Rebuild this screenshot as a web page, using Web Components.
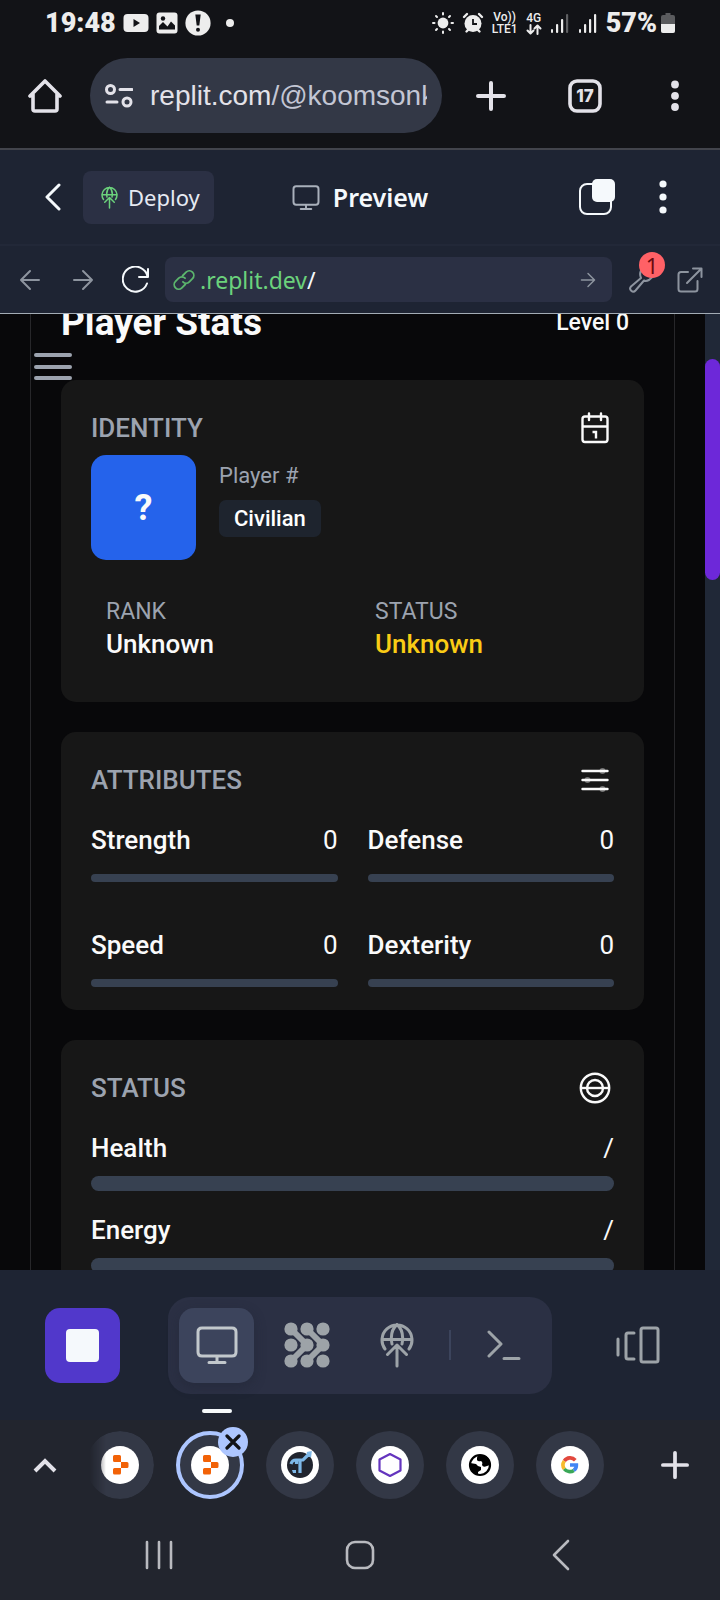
<!DOCTYPE html>
<html lang="en">
<head>
<meta charset="utf-8">
<meta name="viewport" content="width=device-width, initial-scale=1">
<title>Preview - Replit</title>
<style>
  html, body { margin: 0; height: 100%; background: #22252e; }
  body { font-family: Roboto, sans-serif; color: #fafafa; }
</style>
</head>
<body>
<phone-screen>
  <status-bar></status-bar>
  <browser-toolbar></browser-toolbar>
  <workspace-header></workspace-header>
  <preview-bar></preview-bar>
  <preview-pane>
    <player-stats>
      <stat-card heading="IDENTITY" icon="calendar">
        <identity-panel rank="Unknown" status="Unknown">Civilian</identity-panel>
      </stat-card>
      <stat-card heading="ATTRIBUTES" icon="sliders">
        <meter-grid>
          <stat-meter label="Strength">0</stat-meter>
          <stat-meter label="Defense">0</stat-meter>
          <stat-meter label="Speed">0</stat-meter>
          <stat-meter label="Dexterity">0</stat-meter>
        </meter-grid>
      </stat-card>
      <stat-card heading="STATUS" icon="target">
        <stat-meter label="Health" thick>/</stat-meter>
        <stat-meter label="Energy" thick>/</stat-meter>
      </stat-card>
    </player-stats>
  </preview-pane>
  <workspace-dock></workspace-dock>
  <tab-strip></tab-strip>
  <system-nav></system-nav>
</phone-screen>

<script>
const RESET = `
  *, *::before, *::after { box-sizing: border-box; }
  button, a, input { font: inherit; color: inherit; text-decoration: none; }
  button { background: none; border: 0; padding: 0; margin: 0; }
  button, a { display: flex; align-items: center; justify-content: center; }
  input { background: none; border: 0; padding: 0; margin: 0; outline: 0; min-width: 0; }
`;
const define = (name, render) => customElements.define(name, class extends HTMLElement {
  connectedCallback() {
    if (this.shadowRoot) return;
    this.attachShadow({ mode: 'open' }).innerHTML = `<style>${RESET}</style>` + render(this);
  }
});

/* name: [width, height, markup]; strokes use currentColor */
const line = (w, d, extra = '') => `<path d="${d}" fill="none" stroke="currentColor" stroke-width="${w}" stroke-linecap="round" stroke-linejoin="round" ${extra}/>`;
const ICONS = {
  youtube: [26, 20, `<rect x="0.500" y="1" width="25" height="18" rx="4" fill="currentColor"/><path d="M10.500 6v8l6.500-4z" fill="#121317"/>`],
  image: [22, 22, `<rect x=".5" y=".5" width="21" height="21" rx="3" fill="currentColor"/><circle cx="7" cy="6.500" r="2.200" fill="#121317"/><path d="M3 17.500v-3.500l4-4 4.500 4.500 3.500-5 4 4v4z" fill="#121317"/>`],
  alert: [26, 26, `<circle cx="13" cy="13" r="12.600" fill="currentColor"/><path d="M10.300 4.500h5.400l-1.400 11h-2.600z" fill="#121317"/><circle cx="13" cy="19.800" r="2" fill="#121317"/>`],
  dot: [8, 8, `<circle cx="4" cy="4" r="4" fill="currentColor"/>`],
  sun: [22, 22, `<circle cx="11" cy="11" r="5.400" fill="currentColor"/>${line(2, 'M11 1v1.500M11 19.500V21M1 11h1.500M19.500 11H21M4 4l1 1M17 17l1 1M18 4l-1 1M5 17l-1 1')}`],
  alarm: [22, 22, `<circle cx="11" cy="11.500" r="8.500" fill="currentColor"/>${line(2.400, 'M2 5l3-3M20 5l-3-3M4.500 19.500l2-2M17.500 19.500l-2-2')}<path d="M11 7v5h4" fill="none" stroke="#121317" stroke-width="1.800"/>`],
  updown: [16, 11, line(2, 'M4.500 1v8M1.500 6.500l3 3 3-3M11.500 10V2M8.500 4.500l3-3 3 3')],
  signal3: [20, 20, `<g fill="currentColor"><rect x="1" y="16" width="2" height="4" rx="1"/><rect x="6" y="11" width="2.200" height="9" rx="1"/><rect x="11" y="6" width="2.200" height="14" rx="1"/><rect x="16" y="1" width="2.200" height="19" rx="1" opacity=".35"/></g>`],
  signal4: [20, 20, `<g fill="currentColor"><rect x="1" y="16" width="2" height="4" rx="1"/><rect x="6" y="11" width="2.200" height="9" rx="1"/><rect x="11" y="6" width="2.200" height="14" rx="1"/><rect x="16" y="1" width="2.200" height="19" rx="1"/></g>`],
  battery: [14, 20, `<path d="M4.500 0h5v2H12q2 0 2 2v14q0 2-2 2H2q-2 0-2-2V4q0-2 2-2h2.500z" fill="#5a5b5e"/><path d="M0 11h14v7q0 2-2 2H2q-2 0-2-2z" fill="currentColor"/>`],
  home: [34, 36, line(3.600, 'M2 18L17 3l15 15M5 16v15q0 2 2 2h20q2 0 2-2V16')],
  tune: [28, 24, `<g fill="none" stroke="currentColor" stroke-width="3" stroke-linecap="round"><circle cx="5.500" cy="5.500" r="4"/><path d="M15 5.500h12M2 18h10"/><circle cx="22" cy="18" r="4"/></g>`],
  plus: [30, 30, line(4, 'M15 2v26M2 15h26')],
  tabs: [34, 34, `<rect x="2" y="2" width="30" height="30" rx="7" fill="none" stroke="currentColor" stroke-width="3.600"/>`],
  more: [8, 32, `<g fill="currentColor"><circle cx="4" cy="4.500" r="3.900"/><circle cx="4" cy="15.800" r="3.900"/><circle cx="4" cy="27" r="3.900"/></g>`],
  more2: [8, 34, `<g fill="currentColor"><circle cx="4" cy="4" r="3.600"/><circle cx="4" cy="17" r="3.600"/><circle cx="4" cy="30" r="3.600"/></g>`],
  back: [16, 28, line(3, 'M14 2L2 14l12 12')],
  globe: [34, 46, `<g fill="none" stroke="currentColor" stroke-width="3" stroke-linecap="round" stroke-linejoin="round"><path d="M5 27A15 15 0 1 1 29 27M2 17.500h30M12 22C10 12 13 6 17 2.500M22 22C24 12 21 6 17 2.500M17 44V23M7.500 32.500L17 23l9.500 9.500"/></g>`],
  monitor: [42, 38, line(3, 'M6 2h30q4 0 4 4v20q0 4-4 4H6q-4 0-4-4V6q0-4 4-4zM21 30v6M13 36.500h16')],
  layers: [38, 38, `<rect x="2" y="6" width="31" height="30" rx="7" fill="none" stroke="currentColor" stroke-width="2"/><rect x="14" y="1" width="23" height="23" rx="5" fill="currentColor"/>`],
  arrowLeft: [22, 22, line(2, 'M20 11H2M11 2L2 11l9 9')],
  arrowRight: [22, 22, line(2, 'M2 11h18M11 2l9 9-9 9')],
  reload: [28, 28, line(2, 'M26 3v8h-9M25.500 10.500A12.500 12.500 0 1 0 25 17.500')],
  link: [22, 22, `<g transform="rotate(-45 11 11)" fill="none" stroke="currentColor" stroke-width="1.800" stroke-linecap="round"><path d="M9 15H4a4.500 4.500 0 0 1 0-9h4.500a4.500 4.500 0 0 1 4.500 4.500"/><path d="M13 7h5a4.500 4.500 0 0 1 0 9h-4.500A4.500 4.500 0 0 1 9 11.500"/></g>`],
  wrench: [28, 28, line(2, 'M25 9.500L20 14q-3 1.500-5 .5L6.500 24.500a3 3 0 0 1-4.500-4L12 12Q9.500 6 14 2.500')],
  external: [26, 26, line(2, 'M11 5H4Q1.500 5 1.500 7.500V22Q1.500 24.500 4 24.500H18Q20.500 24.500 20.500 22v-8M16 1.500h8.500V10M24 2L10 16')],
  menu: [38, 28, `<g fill="currentColor"><rect y="0" width="38" height="4" rx="2"/><rect y="12" width="38" height="4" rx="2"/><rect y="23" width="38" height="4" rx="2"/></g>`],
  calendar: [36, 36, line(2.400, 'M7 6.500h20q2.500 0 2.500 2.500v20.500q0 2.500-2.500 2.500H7q-2.500 0-2.500-2.500V9q0-2.500 2.500-2.500zM4.500 16.500h25M11 3.500v6.500M23 3.500v6.500') + `<path d="M14.500 22h3.500v6.500" fill="none" stroke="currentColor" stroke-width="2.400"/>`],
  sliders: [36, 36, `<g fill="currentColor" opacity=".4"><circle cx="24.500" cy="9" r="3"/><circle cx="9.500" cy="18" r="3"/><circle cx="24.500" cy="27" r="3"/></g>${line(2.400, 'M4.500 9h25M4.500 18h25M4.500 27h25')}`],
  target: [36, 36, `<g fill="none" stroke="currentColor" stroke-width="2.400"><circle cx="17" cy="18" r="14.200"/><circle cx="17" cy="18" r="8"/><path d="M3 18h28"/></g>`],
  cluster: [46, 46, `<g fill="currentColor"><circle cx="7" cy="7" r="6.600"/><circle cx="7" cy="23" r="6.600"/><circle cx="7" cy="39" r="6.600"/><circle cx="23" cy="7" r="6.600"/><circle cx="23" cy="23" r="6.600"/><circle cx="23" cy="39" r="6.600"/><circle cx="39" cy="7" r="6.600"/><circle cx="39" cy="23" r="6.600"/><circle cx="39" cy="39" r="6.600"/></g><path d="M7 7l16 16L7 39M23 7l16 16-16 16" fill="none" stroke="currentColor" stroke-width="6"/>`],
  terminal: [34, 30, line(3, 'M2 2l12 12L2 26M17 28.500h15')],
  panes: [44, 38, line(3, 'M27 2h13q2 0 2 2v30q0 2-2 2H27q-2 0-2-2V4q0-2 2-2zM18 7h-6q-2 0-2 2v22q0 2 2 2h6M2 13v16')],
  up: [24, 16, `<path d="M2 14L12 4l10 10" fill="none" stroke="currentColor" stroke-width="4"/>`],
  close: [16, 16, `<path d="M2 2l12 12M14 2L2 14" stroke="currentColor" stroke-width="3.200" stroke-linecap="round"/>`],
  replit: [38, 38, `<path d="M12 10.500q0-1.500 1.500-1.500h5q1.500 0 1.500 1.500v5.500h-6.500q-1.500 0-1.500-1.500zM20 16h6q1.500 0 1.500 1.500v3q0 1.500-1.500 1.500h-6zM13.500 22h6.500v5q0 1.500-1.500 1.500h-5q-1.500 0-1.500-1.500v-3.500q0-1.500 1.500-1.500z" fill="#f26207"/>`],
  trade: [38, 38, `<circle cx="19" cy="19" r="13" fill="#20242e"/><path d="M10 18q1-4 5-4h7l5-5M26 7.500l3-.5-.5 4M15.500 15v3M19 15v12" fill="none" stroke="#7db8e8" stroke-width="3.200"/><path d="M11 24h4v3h-3z" fill="#7db8e8"/>`],
  hexagon: [38, 38, `<path d="M19 8l10.500 5.500v11L19 30 8.500 24.500v-11z" fill="none" stroke="#6434be" stroke-width="2.200" stroke-linejoin="round"/>`],
  earth: [38, 38, `<circle cx="19" cy="19" r="10" fill="#fff" stroke="#000" stroke-width="2.200"/><path d="M20 9q-4 0-4 3v2q1 2 4 1 2 1 1 4 1 3 5 1l3-1q1-6-4-9zM9 17l6 1q2 3 5 3v3l-3 2v3q-7-1-8-9z" fill="#000"/>`],
  google: [38, 38, `<g fill="none" stroke-width="3.600"><path d="M24.300 14.200A7 7 0 0 0 13.300 15" stroke="#e2483d"/><path d="M13.300 15a7 7 0 0 0 0 8" stroke="#f7bb2c"/><path d="M13.300 23a7 7 0 0 0 9.500 1.400" stroke="#3aa757"/><path d="M22.800 24.400Q25.500 22.500 25.400 19H19" stroke="#4285f4"/></g>`],
  recents: [30, 30, line(2.600, 'M3 2v26M15 2v26M27 2v26')],
  square: [30, 30, `<rect x="2" y="2" width="26" height="26" rx="8" fill="none" stroke="currentColor" stroke-width="2.600"/>`],
  navback: [20, 32, line(2.600, 'M17 2L3 16l14 14')],
};
define('ui-icon', el => {
  const [w, h, body] = ICONS[el.getAttribute('name')];
  const width = Number(el.getAttribute('width')) || w;
  return `<style>:host{display:block;flex:none} svg{display:block}</style>
  <svg width="${width}" height="${Math.round(h * width / w)}" viewBox="0 0 ${w} ${h}" aria-hidden="true">${body}</svg>`;
});

define('phone-screen', () => `
<style>
  :host { display: flex; flex-direction: column; height: 100vh; overflow: hidden; }
  ::slotted(*) { flex: none; }
  ::slotted(preview-pane) { flex: 1; min-height: 0; }
</style><slot></slot>`);

define('status-bar', () => `
<style>
  :host { display: flex; align-items: center; justify-content: space-between; height: 46px;
    padding: 0 45px; background: #121317; color: #ededed; }
  div { display: flex; align-items: center; gap: 8px; }
  b { font-size: 27px; font-weight: 900; line-height: 32px; }
  .left { gap: 7px; }
  .left ui-icon:last-child { margin-left: 8px; }
  .net { flex-direction: column; gap: 0; font-size: 12px; line-height: 12px; font-weight: 500; }
  .right { gap: 8px; }
  .battery { gap: 4px; }
</style>
<div class="left"><b>19:48</b><ui-icon name="youtube"></ui-icon><ui-icon name="image"></ui-icon><ui-icon name="alert"></ui-icon><ui-icon name="dot"></ui-icon></div>
<div class="right">
  <ui-icon name="sun"></ui-icon><ui-icon name="alarm"></ui-icon>
  <div class="net"><span>Vo))</span><span>LTE1</span></div>
  <div class="net"><span>4G</span><ui-icon name="updown"></ui-icon></div>
  <ui-icon name="signal3"></ui-icon><ui-icon name="signal4"></ui-icon>
  <div class="battery"><b>57%</b><ui-icon name="battery"></ui-icon></div>
</div>`);

define('browser-toolbar', () => `
<style>
  :host { display: flex; align-items: center; padding: 12px 0 15px; background: #121317;
    border-bottom: 2px solid #42444c; color: #e3e2e9; }
  .home { width: 90px; }
  .address { flex: 1; min-width: 0; display: flex; align-items: center; height: 75px;
    padding: 0 15px; border-radius: 38px; background: #333846; font: 28px/36px "Liberation Sans", sans-serif; }
  .address button { margin-right: 17px; }
  .address input { flex: 1; width: 0; color: #c3c6d4; }
  .new { width: 98px; } .tabs { width: 90px; display: grid; } .more { width: 90px; }
  .tabs > * { grid-area: 1 / 1; justify-self: center; align-self: center; }
  .tabs span { font: 800 17px/24px Inter, sans-serif; }
</style>
<button class="home" aria-label="Home"><ui-icon name="home"></ui-icon></button>
<div class="address">
  <button aria-label="Site settings"><ui-icon name="tune"></ui-icon></button>
  <label for="url">replit.com</label><input id="url" value="/@koomsonk" spellcheck="false">
</div>
<button class="new" aria-label="New tab"><ui-icon name="plus"></ui-icon></button>
<button class="tabs" aria-label="17 tabs"><ui-icon name="tabs"></ui-icon><span>17</span></button>
<button class="more" aria-label="More"><ui-icon name="more"></ui-icon></button>`);

define('workspace-header', () => `
<style>
  :host { display: grid; grid-template-columns: 1fr auto 1fr; align-items: center; height: 94px;
    background: #1e2433; border-bottom: 2px solid #222838; color: #f5f9fc;
    font-family: "Noto Sans", sans-serif; box-sizing: content-box; height: 94px; }
  .side { display: flex; align-items: center; }
  .side:last-child { justify-content: flex-end; gap: 43px; padding-right: 53px; }
  .back { width: 38px; margin-left: 34px; margin-right: 11px; }
  .deploy { height: 53px; padding: 0 14px 0 18px; gap: 10px; border-radius: 8px; background: #2b3044;
    font-size: 22px; line-height: 28px; color: #e6eaf2; }
  .deploy ui-icon { color: #6bd27c; }
  h1 { display: flex; align-items: center; gap: 13px; margin: 0; font-size: 25px; line-height: 30px; font-weight: 600; }
  h1 ui-icon { color: #a9b0bb; }
</style>
<div class="side">
  <button class="back" aria-label="Back"><ui-icon name="back"></ui-icon></button>
  <button class="deploy"><ui-icon name="globe" width="17"></ui-icon>Deploy</button>
</div>
<h1><ui-icon name="monitor" width="28"></ui-icon>Preview</h1>
<div class="side">
  <button aria-label="Tabs"><ui-icon name="layers"></ui-icon></button>
  <button aria-label="Menu"><ui-icon name="more2"></ui-icon></button>
</div>`);

define('preview-bar', () => `
<style>
  :host { display: flex; align-items: center; height: 67px; padding: 0 17px 0 19px;
    background: #1e2433; border-bottom: 1px solid #a3acb5; color: #8d949f; font-family: "Noto Sans", sans-serif; }
  .nav { display: flex; gap: 31px; align-items: center; margin-right: 15px; }
  .nav button:last-child { color: #f5f9fc; margin-left: -3px; }
  .field { flex: 1; min-width: 0; display: flex; align-items: center; height: 45px; padding: 0 16px 0 8px;
    border-radius: 8px; background: #2b3044; font-size: 23px; line-height: 30px; }
  .field > ui-icon { color: #5cb66d; margin-right: 5px; }
  label { color: #6bd27c; }
  input { flex: 1; width: 0; color: #f5f9fc; }
  .tools { position: relative; margin: 0 20px 0 17px; }
  .badge { position: absolute; left: 10px; top: -14px; width: 26px; height: 26px; border-radius: 50%;
    background: #ff6166; color: #6b0a0e; font-size: 22px; line-height: 26px; text-align: center; }
</style>
<div class="nav">
  <button aria-label="Back"><ui-icon name="arrowLeft"></ui-icon></button>
  <button aria-label="Forward"><ui-icon name="arrowRight"></ui-icon></button>
  <button aria-label="Reload"><ui-icon name="reload"></ui-icon></button>
</div>
<div class="field"><ui-icon name="link"></ui-icon><label for="path">.replit.dev</label><input id="path" value="/" spellcheck="false"><button aria-label="Go"><ui-icon name="arrowRight" width="16"></ui-icon></button></div>
<button class="tools" aria-label="Developer tools"><ui-icon name="wrench"></ui-icon><span class="badge">1</span></button>
<a href="#" aria-label="Open in new tab"><ui-icon name="external"></ui-icon></a>`);

define('preview-pane', () => `
<style>
  :host { display: flex; background: #08080a; position: relative; overflow: hidden; }
  .view { flex: 1; min-width: 0; overflow: hidden; padding: 0 30px; }
  .track { width: 15px; background: #202837; display: grid; grid-template-rows: 45fr 221fr 690fr; }
  .thumb { grid-row: 2; background: #6d28d9; border-radius: 8px; }
  .menu { position: absolute; left: 34px; top: 39px; color: #9ca3af; }
</style>
<div class="view"><slot></slot></div>
<div class="track"><div class="thumb"></div></div>
<button class="menu" aria-label="Menu"><ui-icon name="menu"></ui-icon></button>`);

define('player-stats', () => `
<style>
  :host { display: flex; flex-direction: column; gap: 30px; padding: 0 30px 30px;
    border: solid #27272a; border-width: 0 1px; }
  header { display: flex; align-items: center; justify-content: space-between; height: 55px; padding-right: 15px; }
  h2 { margin: 0; font-size: 37px; line-height: 48px; font-weight: 700; }
  header span { font-size: 23px; line-height: 30px; font-weight: 500; }
</style>
<header><h2>Player Stats</h2><span>Level 0</span></header>
<slot></slot>`);

define('stat-card', el => `
<style>
  :host { display: block; background: #171717; border-radius: 15px; padding: 30px; padding-bottom: 23px; }
  header { display: flex; align-items: center; justify-content: space-between; height: 36px; margin-bottom: 9px; }
  h3 { margin: 0; font-size: 26px; line-height: 32px; font-weight: 500; color: #9ca3af; }
</style>
<header><h3>${el.getAttribute('heading')}</h3><ui-icon name="${el.getAttribute('icon')}"></ui-icon></header>
<slot></slot>`);

define('identity-panel', el => `
<style>
  :host { display: block; padding-bottom: 2px; }
  .who { display: flex; gap: 23px; align-items: flex-start; }
  .avatar { width: 105px; height: 105px; border-radius: 15px; background: #2563eb; display: grid;
    place-items: center; font-size: 36px; font-weight: 700; }
  .name { display: flex; flex-direction: column; align-items: flex-start; gap: 9px; padding-top: 6px; }
  .name p { margin: 0; font-size: 22px; line-height: 30px; color: #9ca3af; }
  .name span { padding: 0 15px; border-radius: 7px; background: #1e242e;
    font-size: 22px; line-height: 37px; font-weight: 500; color: #fff; }
  dl { display: grid; grid-template-columns: 1fr 1fr; gap: 45px; margin: 0; padding: 36px 15px 15px; }
  dt { font-size: 23px; line-height: 31px; color: #9ca3af; }
  dd { margin: 0; font-size: 26px; line-height: 35px; font-weight: 500; }
  .warn { color: #facc15; }
</style>
<div class="who"><div class="avatar">?</div><div class="name"><p>Player #</p><span><slot></slot></span></div></div>
<dl><div><dt>RANK</dt><dd>${el.getAttribute('rank')}</dd></div>
<div><dt>STATUS</dt><dd class="warn">${el.getAttribute('status')}</dd></div></dl>`);

define('meter-grid', () => `
<style>:host { display: grid; grid-template-columns: 1fr 1fr; gap: 30px; }</style><slot></slot>`);

define('stat-meter', el => {
  const thick = el.hasAttribute('thick');
  return `
<style>
  :host { display: block; padding-top: 15px; }
  .row { display: flex; justify-content: space-between; font-size: 26px; line-height: 36px; margin-bottom: ${thick ? 10 : 16}px; }
  .row span { font-weight: 500; }
  .bar { height: ${thick ? 15 : 8}px; border-radius: 8px; background: #374151; ${thick ? 'margin-bottom: 6px;' : ''} }
</style>
<div class="row"><span id="n">${el.getAttribute('label')}</span><div><slot></slot></div></div>
<div class="bar" role="progressbar" aria-labelledby="n" aria-valuenow="0"></div>`;
});

define('workspace-dock', () => `
<style>
  :host { display: flex; align-items: center; height: 150px;
    padding: 0 60px 0 45px; background: #1e2433; color: #9da3a8; }
  .stop { width: 75px; height: 75px; border-radius: 15px; background: #5138cb; }
  .stop span { width: 33px; height: 33px; border-radius: 4px; background: #f5f9fc; }
  nav { display: flex; align-items: center; gap: 15px; height: 97px; margin: 0 auto 0 48px; padding: 0 11px; border-radius: 22px; background: #2b3044; }
  nav button { width: 75px; height: 75px; border-radius: 15px; }
  nav .active { position: relative; background: #3c445c; color: #c2c8cc; box-shadow: 0 4px 12px #1e243366; }
  .active::after { content: ""; position: absolute; left: 23px; top: 101px; width: 30px; height: 4px; border-radius: 2px; background: #f5f9fc; }
  hr { width: 2px; height: 30px; border: 0; margin: 0; background: #3c445c; }
</style>
<button class="stop" aria-label="Stop"><span></span></button>
<nav>
  <button class="active" aria-label="Preview"><ui-icon name="monitor"></ui-icon></button>
  <button aria-label="Agent"><ui-icon name="cluster"></ui-icon></button>
  <button aria-label="Deployments"><ui-icon name="globe"></ui-icon></button>
  <hr>
  <button aria-label="Shell"><ui-icon name="terminal"></ui-icon></button>
</nav>
<button aria-label="Switch pane"><ui-icon name="panes"></ui-icon></button>`);

define('tab-strip', () => `
<style>
  :host { display: flex; align-items: center; height: 90px; background: #22252e; color: #e3e2e9; }
  .side { width: 90px; }
  nav { flex: 1; display: flex; justify-content: space-between; padding: 0 26px 0 0; margin-left: -4px; }
  .tab { position: relative; width: 68px; height: 68px; border-radius: 50%; background: #333846; }
  .tab > ui-icon { background: #fff; border-radius: 50%; }
  .tab:first-child { -webkit-mask-image: linear-gradient(90deg, transparent 3px, #000 20px); }
  .current { border: 4px solid #adc6ff; }
  .badge { position: absolute; right: -8px; top: -8px; width: 30px; height: 30px; border-radius: 50%;
    background: #adc6ff; color: #121317; display: grid; place-items: center; }
</style>
<button class="side" aria-label="Show tabs"><ui-icon name="up"></ui-icon></button>
<nav>
  <button class="tab" aria-label="Replit"><ui-icon name="replit"></ui-icon></button>
  <button class="tab current" aria-label="Close Replit"><ui-icon name="replit"></ui-icon><span class="badge"><ui-icon name="close"></ui-icon></span></button>
  <button class="tab" aria-label="Trade"><ui-icon name="trade"></ui-icon></button>
  <button class="tab" aria-label="Hexagon"><ui-icon name="hexagon"></ui-icon></button>
  <button class="tab" aria-label="Web page"><ui-icon name="earth"></ui-icon></button>
  <button class="tab" aria-label="Google"><ui-icon name="google"></ui-icon></button>
</nav>
<button class="side" aria-label="New tab"><ui-icon name="plus" width="28"></ui-icon></button>`);

define('system-nav', () => `
<style>
  :host { display: grid; grid-template-columns: repeat(3, 1fr); align-items: center; height: 90px;
    padding: 0 58px; background: #22252e; color: #b9babf; }
</style>
<button aria-label="Recents"><ui-icon name="recents"></ui-icon></button>
<button aria-label="Home"><ui-icon name="square"></ui-icon></button>
<button aria-label="Back"><ui-icon name="navback"></ui-icon></button>`);

document.querySelector('preview-pane').shadowRoot.querySelector('.view').scrollTop = 19;
</script>
</body>
</html>
